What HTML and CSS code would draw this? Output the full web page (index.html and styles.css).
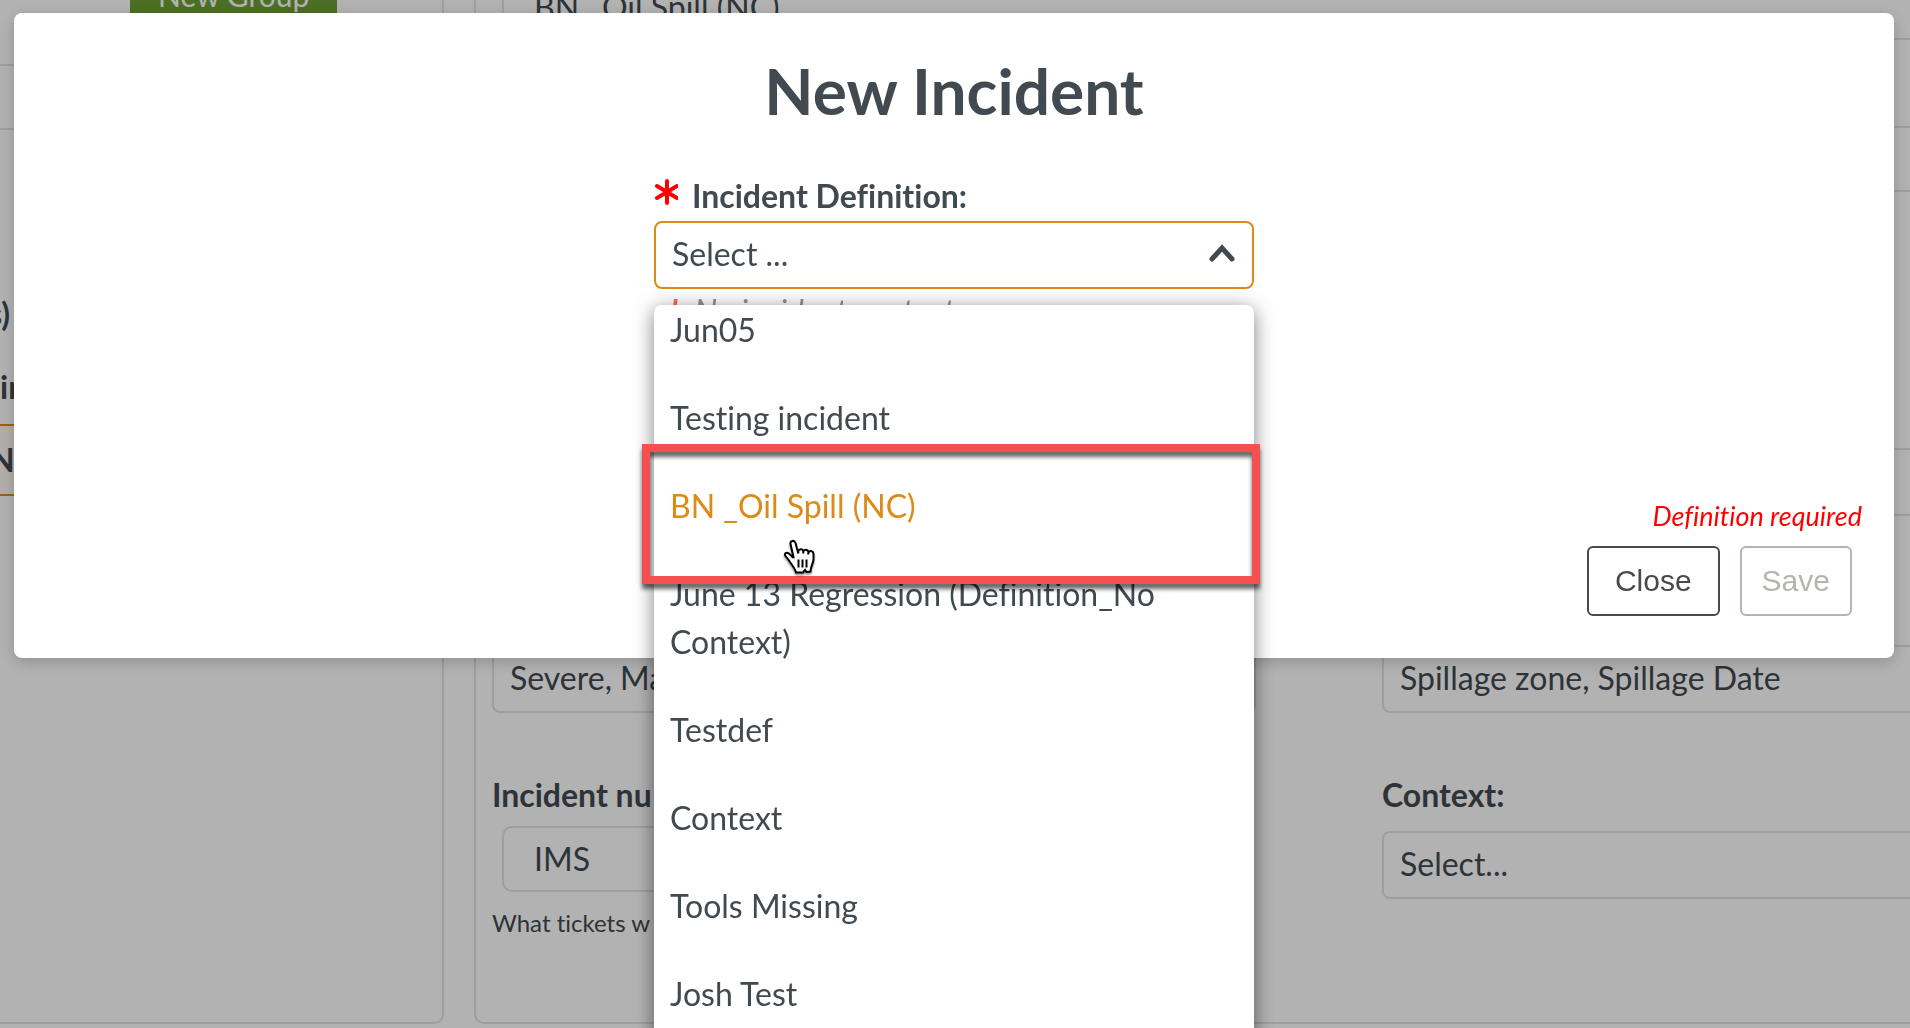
FILE: index.html
```html
<!DOCTYPE html>
<html lang="en">
<head>
  <meta charset="UTF-8">
  <title>New Incident</title>
  <meta name="viewport" content="width=device-width, initial-scale=1">
  <link rel="stylesheet" href="styles.css">
</head>
<body>
  <div class="page">
    <aside class="sidebar">
      <button class="new-group" type="button">New Group</button>
      <div class="bar"></div>
      <div class="groups">
        <div class="group">s)</div>
        <div class="group-label">in</div>
        <div class="group active">N</div>
      </div>
    </aside>

    <main class="details">
      <input class="input name" type="text" value="BN _Oil Spill (NC)" aria-label="Name">
      <div class="bar"></div>
      <div class="columns">
        <select class="select" aria-label="Type"></select>
        <select class="select" aria-label="Group"></select>
      </div>
      <div class="columns levels">
        <select class="select" aria-label="Severity"><option>Severe, Ma</option></select>
        <select class="select" aria-label="Attributes"><option>Spillage zone, Spillage Date</option></select>
      </div>
      <div class="columns">
        <div>
          <label class="label" for="prefix">Incident nu</label>
          <input class="input" id="prefix" type="text" value="IMS">
          <p class="help">What tickets w</p>
        </div>
        <div>
          <label class="label" for="context">Context:</label>
          <select class="select context" id="context"><option>Select...</option></select>
        </div>
      </div>
    </main>
  </div>

  <div class="overlay">
    <div class="modal" role="dialog" aria-labelledby="title">
      <h1 id="title">New Incident</h1>
      <div class="form">
        <label class="label required" for="definition">
          <svg class="star" width="24" height="26" viewBox="0 0 24 26" aria-hidden="true">
            <path d="M13 2v22M3 7l20 12M23 7L3 19" stroke="#f00" stroke-width="4" stroke-linecap="round"/>
          </svg>
          Incident Definition:
        </label>
        <div class="dropdown">
          <select class="select open" id="definition"><option>Select ...</option></select>
          <svg class="chevron" width="28" height="20" viewBox="0 0 28 20" aria-hidden="true">
            <path d="M4 16L14 5l10 11" fill="none" stroke="#414a51" stroke-width="5" stroke-linecap="round"/>
          </svg>
          <ul class="options" role="listbox" aria-label="Incident Definition">
            <li role="option">Jun05</li>
            <li role="option">Testing incident</li>
            <li class="hover" role="option">
              BN _Oil Spill (NC)
              <span class="highlight"></span>
              <svg class="cursor" width="34" height="38" viewBox="0 0 34 38" aria-hidden="true">
                <path d="M12 22L8 4.500C7.500 1.500 11.800 .8 12.700 3.800L15.500 12C16 9.500 19.800 9.600 20.300 12.200C21.200 9.800 24.800 10.300 25.300 12.800C27.500 10.800 30.500 12.200 30.500 15V20C30.500 24.500 28 26.500 27.500 32.500L23.500 33L22 31L20 33.500H13C12 29 8.500 25.500 6 21.500L2.500 17C.8 14.500 3.600 12.800 5.800 14.500L10.500 19" fill="#fff"/>
                <path d="M10.700 19L7.500 5C6.800 1.600 11.300 .6 12.500 4L15.300 14.500M15.300 14V12C16 9.500 19.800 9.600 20.300 12.200V14.500M20.300 12.500C21.200 9.800 24.800 10.300 25.300 12.800V15.500M25.300 13.500C27.500 10.800 30.500 12.200 30.500 15V20C30.500 24.500 27.500 27 27.500 32.500L23.500 33L22 31L20 33.500H13C12 29 8.500 25.500 6 21.500L2.500 17C.8 14.500 3.600 12.800 5.800 14.500L10.700 19M15.500 20.500V28.500M19.500 20.500V28.500M23.500 20.500V28.500" fill="none" stroke="#000" stroke-width="2"/>
              </svg>
            </li>
            <li role="option">June 13 Regression (Definition_No Context)</li>
            <li role="option">Testdef</li>
            <li role="option">Context</li>
            <li role="option">Tools Missing</li>
            <li role="option">Josh Test</li>
          </ul>
        </div>
        <p class="hint"><b>!</b>No incident context</p>
      </div>
      <div class="footer">
        <p class="error">Definition required</p>
        <div class="buttons">
          <button class="btn" type="button">Close</button>
          <button class="btn" type="button" disabled>Save</button>
        </div>
      </div>
    </div>
  </div>
</body>
</html>
```
FILE: styles.css
```css
* {
  box-sizing: border-box;
}
body {
  margin: 0;
  background: #fff;
  color: #414a51;
  font-family: Lato, sans-serif;
  font-size: 32px;
  font-variant-ligatures: none;
  line-height: 48px;
  overflow: hidden;
}
p {
  margin: 0;
}

/* page behind the dialog */
.page {
  display: flex;
  gap: 30px;
  height: 100vh;
  padding-bottom: 4px;
  overflow: hidden;
}
.sidebar,
.details {
  border: 2px solid #e3e3e3;
  border-top: 0;
}
.sidebar {
  flex: 0 0 444px;
  border-left: 0;
  border-bottom-right-radius: 10px;
}
.details {
  flex: none;
  padding-left: 16px;
  border-bottom-left-radius: 10px;
}
.new-group {
  display: block;
  margin: -29px 0 45px 130px;
  padding: 0 28px;
  border: 0;
  background: #6c9f33;
  color: #fff;
  font: inherit;
  font-size: 30px;
  line-height: 48px;
}
.bar {
  height: 66px;
  border: 2px solid #e3e3e3;
  border-width: 2px 0;
}
.groups {
  margin: 160px 0 0 -12px;
  font-weight: bold;
}
.group-label {
  margin: 25px 0 13px;
  padding-left: 12px;
}
.active {
  padding: 10px 0;
  border: 2px solid #dd8a17;
  background: #fffaf5;
}
.details .bar {
  margin: 86px 0 256px;
}
.columns {
  display: grid;
  grid-template-columns: 40vw 40vw;
  gap: 126px;
}
.levels {
  margin: 129px 0 58px;
}
.label {
  display: block;
  font-weight: bold;
}
.select,
.input {
  display: block;
  width: 100%;
  height: 68px;
  border: 2px solid #e3e3e3;
  border-radius: 8px;
  background: #fff;
  color: inherit;
  font: inherit;
}
.select {
  appearance: none;
  padding: 0 16px 2px;
}
.input {
  width: calc(100% - 20px);
  height: 66px;
  margin: 7px 10px 15px;
  padding: 0 30px 2px;
  border-radius: 10px;
}
.name {
  margin-top: -26px;
}
.context {
  margin-top: 12px;
}
.help {
  font-size: 24px;
  line-height: 32px;
}

/* dialog */
.overlay {
  position: fixed;
  inset: 0;
  padding: 13px 16px 0 14px;
  background: rgba(0, 0, 0, 0.3);
  overflow: hidden;
}
.modal {
  padding: 40px 32px 42px;
  border-radius: 8px;
  background: #fff;
  box-shadow: 0 4px 16px rgba(0, 0, 0, 0.2);
}
h1 {
  margin: 0 0 43px;
  font-size: 64px;
  line-height: 76px;
  text-align: center;
}
.form {
  max-width: 600px;
  margin: 0 auto 167px;
}
.required {
  display: flex;
  gap: 14px;
  margin-bottom: 1px;
}
.star {
  margin-top: 7px;
}
.dropdown {
  position: relative;
}
.open {
  border-color: #dd8a17;
}
.chevron {
  position: absolute;
  top: 22px;
  right: 18px;
}
.hint {
  padding-left: 16px;
  line-height: 44px;
  font-style: italic;
  opacity: 0.6;
}
.hint b {
  margin-right: 16px;
  color: #f00;
}
.options {
  position: absolute;
  top: 84px;
  left: 0;
  right: 0;
  z-index: 1;
  margin: 0;
  padding: 1px 0 40px;
  list-style: none;
  border-radius: 8px;
  background: #fff;
  box-shadow: 0 4px 20px rgba(0, 0, 0, 0.5);
}
.options li {
  padding: 0 16px 40px;
}
.options .hover {
  position: relative;
  color: #dd8a17;
}
.highlight {
  position: absolute;
  inset: -38px -6px -14px -12px;
  border: 8px solid #f55050;
  filter: drop-shadow(0 5px 2px rgba(0, 0, 0, 0.6));
}
.cursor {
  position: absolute;
  top: 57px;
  left: 129px;
  filter: drop-shadow(0 2px 1px rgba(0, 0, 0, 0.4));
}
.error {
  color: #f00;
  font-size: 27px;
  line-height: 32px;
  font-style: italic;
  text-align: right;
}
.buttons {
  display: flex;
  justify-content: flex-end;
  gap: 20px;
  margin: 14px 10px 0 0;
}
.btn {
  height: 70px;
  padding: 0 26px;
  border: 2px solid #494949;
  border-radius: 6px;
  background: #fff;
  color: #494949;
  font-family: "Liberation Sans", Arial, sans-serif;
  font-size: 30px;
}
.btn:disabled {
  padding: 0 20px;
  border-color: #b5b5ae;
  color: #b5b5ae;
}
```
